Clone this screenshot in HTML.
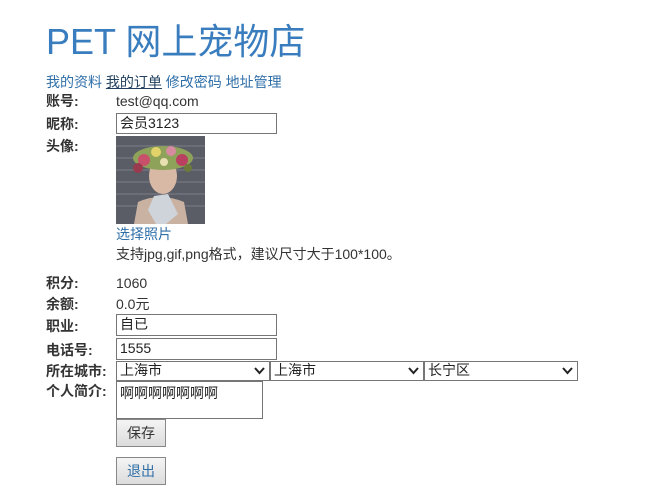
<!DOCTYPE html>
<html><head><meta charset="utf-8"><style>
body{margin:0;width:661px;height:499px;background:#fff;font-family:"Liberation Sans","Noto Sans CJK SC",sans-serif;font-size:14px;color:#333;position:relative;overflow:hidden}
.a{position:absolute;white-space:nowrap;line-height:16px}
.l{font-weight:bold;color:#333;left:46px}
.blue{color:#2f6fa8}
.in{position:absolute;border:1px solid #767676;background:#fff;box-sizing:border-box;font-size:14px;padding:1px 3px;line-height:17px;color:#222}
.sel{position:absolute;border:1px solid #767676;background:#fff;box-sizing:border-box;height:20px;font-size:14px;padding:0 3px;line-height:17px;color:#222}
.sel svg{position:absolute;right:4px;top:5px}
.btn{position:absolute;border:1px solid #888;background:linear-gradient(#f4f4f4,#dcdcdc);box-sizing:border-box;font-size:14px;text-align:center}
</style></head><body>
<div class="a" style="left:46px;top:20px;font-size:36px;color:#3a7dbf;line-height:44px">PET 网上宠物店</div>
<div class="a blue" style="left:46px;top:74px">我的资料 <span style="color:#23415e;text-decoration:underline">我的订单</span> 修改密码 地址管理</div>
<div class="a l" style="top:93px">账号:</div><div class="a" style="left:116px;top:93px">test@qq.com</div>
<div class="a l" style="top:116px">昵称:</div><div class="in" style="left:116px;top:113px;width:161px;height:21px">会员3123</div>
<div class="a l" style="top:138px">头像:</div>
<svg class="a" style="left:116px;top:136px" width="89" height="88" viewBox="0 0 89 88">
<rect width="89" height="88" fill="#5a5c66"/>
<g stroke="#6b6d77" stroke-width="2"><line x1="0" y1="10" x2="89" y2="10"/><line x1="0" y1="22" x2="89" y2="22"/><line x1="0" y1="34" x2="89" y2="34"/><line x1="0" y1="46" x2="89" y2="46"/><line x1="0" y1="58" x2="89" y2="58"/><line x1="0" y1="70" x2="89" y2="70"/></g>
<path d="M18 88 L22 66 Q44 56 68 66 L72 88Z" fill="#c9b2a2"/>
<path d="M38 60 L52 58 L62 78 L50 88 L40 88 L32 74Z" fill="#cfd3da"/>
<ellipse cx="47" cy="40" rx="14" ry="18" fill="#d8b9a6"/>
<ellipse cx="47" cy="22" rx="30" ry="12" fill="#8ea25a"/>
<circle cx="28" cy="24" r="6" fill="#c8506a"/><circle cx="40" cy="16" r="5" fill="#e2d26a"/><circle cx="55" cy="15" r="5" fill="#d88aa0"/><circle cx="66" cy="24" r="6" fill="#b94060"/><circle cx="48" cy="26" r="4" fill="#e8e0b0"/><circle cx="22" cy="32" r="5" fill="#9a3a4e"/><circle cx="72" cy="32" r="4" fill="#6d7b3a"/>
</svg>
<div class="a blue" style="left:116px;top:226px">选择照片</div>
<div class="a" style="left:116px;top:246px">支持jpg,gif,png格式，建议尺寸大于100*100。</div>
<div class="a l" style="top:275px">积分:</div><div class="a" style="left:116px;top:275px">1060</div>
<div class="a l" style="top:296px">余额:</div><div class="a" style="left:116px;top:296px">0.0元</div>
<div class="a l" style="top:318px">职业:</div><div class="in" style="left:116px;top:314px;width:161px;height:22px">自已</div>
<div class="a l" style="top:342px">电话号:</div><div class="in" style="left:116px;top:338px;width:161px;height:22px">1555</div>
<div class="a l" style="top:363px">所在城市:</div>
<div class="sel" style="left:116px;top:361px;width:154px">上海市<svg width="11" height="8"><path d="M1 1 L5.5 6 L10 1" stroke="#222" stroke-width="2" fill="none"/></svg></div>
<div class="sel" style="left:270px;top:361px;width:154px">上海市<svg width="11" height="8"><path d="M1 1 L5.5 6 L10 1" stroke="#222" stroke-width="2" fill="none"/></svg></div>
<div class="sel" style="left:424px;top:361px;width:154px">长宁区<svg width="11" height="8"><path d="M1 1 L5.5 6 L10 1" stroke="#222" stroke-width="2" fill="none"/></svg></div>
<div class="a l" style="top:383px">个人简介:</div>
<div class="in" style="left:116px;top:381px;width:147px;height:38px;padding-top:3px">啊啊啊啊啊啊啊</div>
<div class="btn" style="left:116px;top:419px;width:50px;height:28px;line-height:26px;color:#333">保存</div>
<div class="btn" style="left:116px;top:457px;width:50px;height:28px;line-height:26px;color:#2f6fa8">退出</div>
</body></html>
